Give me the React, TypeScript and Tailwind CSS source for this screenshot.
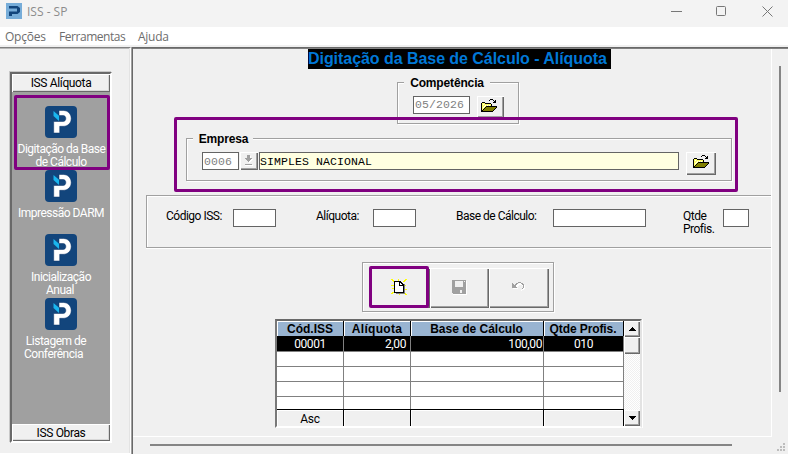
import type { ReactNode } from 'react';

const sans = "font-['Liberation_Sans',Arial,sans-serif]";
const small = "font-['Roboto',sans-serif] text-[12px] tracking-[-0.5px]";
const mono = "font-['Liberation_Mono',monospace] text-[11.5px] tracking-[0.1px]";
const etched = 'border border-[#a0a0a0] shadow-[1px_1px_0_#fff,inset_1px_1px_0_#fff]';
const raised =
  'bg-[#f0f0f0] shadow-[inset_1px_1px_0_#fff,inset_-1px_-1px_0_#696969,inset_-2px_-2px_0_#a0a0a0]';
const field = 'border border-[#646464] bg-white';

function Logo() {
  return (
    <svg width="32" height="32" viewBox="0 0 32 32" className="block shrink-0">
      <rect width="32" height="32" rx="4" fill="#12457c" />
      <path
        d="M14 4.500H18.300C22.800 4.500 26.200 7.900 26.200 12.500S22.800 20.300 18.300 20.300H14.700V27H8.700V15.500H18C19.800 15.500 20.800 14.200 20.800 12.500S19.800 9.500 18 9.500H14z"
        fill="#fff"
        stroke="#0a3266"
        strokeWidth="0.5"
      />
      <path d="M8.500 5l5.500 4.700v5.200L8.500 10z" fill="#19b5ee" />
    </svg>
  );
}

function FolderIcon() {
  return (
    <svg width="16" height="13" viewBox="0 0 16 13" shapeRendering="crispEdges" className="block">
      <path d="M1 4h3v1h6v4H5v1H4v1H3v1H1z" fill="#ffff66" />
      <path d="M2 5h1v1H2zM4 6h1v1H4zM6 6h1v1H6zM8 6h1v1H8zM2 8h1v1H2zM3 7h1v1H3zM5 7h1v1H5zM7 7h1v1H7z" fill="#fff" />
      <path d="M5 8h10v1h-1v1h-1v1h-1v1H2v-1h1v-1h1V9h1z" fill="#808000" />
      <path
        d="M1 3h3v1H1zM0 4h1v9H0zM4 4h6v1H4zM10 5h1v2h-1zM5 7h11v1H5zM4 8h1v1H4zM3 9h1v1H3zM2 10h1v1H2zM1 11h1v1H1zM15 8h1v1h-1zM14 9h1v1h-1zM13 10h1v1h-1zM12 11h1v1h-1zM1 12h11v1H1zM9 0h3v1H9zM8 1h1v1H8zM12 1h1v1h-1zM13 2h1v1h-1zM14 1h1v3h-1zM12 3h2v1h-2z"
        fill="#000"
      />
    </svg>
  );
}

function Group({ title, className, legend, children }: { title: string; className: string; legend: string; children: ReactNode }) {
  return (
    <div className={`relative ${etched} ${className}`}>
      <span
        className={`absolute -top-[7px] flex h-[14px] items-center justify-center whitespace-nowrap bg-[#f0f0f0] text-[12px] font-bold leading-[14px] text-black ${legend}`}
      >
        {title}
      </span>
      {children}
    </div>
  );
}

const items = [
  { lines: [['Digitação da Base', 'pl-px'], ['de Cálculo', '']] },
  { lines: [['Impressão DARM', '']] },
  { lines: [['Inicialização', ''], ['Anual', 'pr-[2px]']] },
  { lines: [['Listagem de', 'pr-[10px]'], ['Conferência', 'pr-[15px]']] },
];

function Sidebar() {
  const header = `flex shrink-0 items-center justify-center bg-[#f0f0f0] shadow-[inset_1px_1px_0_#fff,inset_-1px_-1px_0_#696969,inset_-2px_-2px_0_#d8d8d8] font-['Roboto',sans-serif] text-[12px] tracking-[-0.35px]`;
  return (
    <aside className="relative ml-[10px] mt-[24px] flex h-[371px] w-[102px] flex-col border-2 border-b-white border-l-[#696969] border-r-white border-t-[#696969] bg-[#a0a0a0] shadow-[-1px_-1px_0_#c8c8c8]">
      <div className={`h-[18px] ${header}`}>ISS Alíquota</div>
      <div className="flex grow flex-col pt-[14px]">
        {items.map((item) => (
          <div key={item.lines[0][0]} className="flex h-16 flex-col items-center">
            <Logo />
            <div className={`pt-[5px] text-center leading-[13px] text-white ${small}`}>
              {item.lines.map(([line, shift]) => (
                <div key={line} className={`whitespace-nowrap ${shift}`}>
                  {line}
                </div>
              ))}
            </div>
          </div>
        ))}
      </div>
      <div className={`h-[17px] ${header}`}>ISS Obras</div>
      <div className="absolute left-[2px] top-[21px] h-[75px] w-[96px] rounded-[2px] border-[3px] border-[#800080]" />
    </aside>
  );
}

function Toolbar() {
  const button = `flex h-[40px] items-center justify-center ${raised}`;
  return (
    <div className={`relative ml-[229px] mt-[14px] flex h-[50px] w-[192px] pl-[7px] pt-[5px] ${etched}`}>
      <div className={`w-[60px] ${button}`}>
        <svg width="16" height="16" viewBox="0 0 16 16" shapeRendering="crispEdges" className="mb-[2px] mr-[2px]">
          <path
            d="M0 0h2v1H0zM1 1h2v1H1zM2 2h1v1H2zM7 0h1v2H7zM14 0h2v1h-2zM13 1h2v1h-2zM12 2h2v1h-2zM0 6h3v1H0zM13 6h2v1h-2zM1 9h2v1H1zM14 10h2v1h-2zM1 13h2v1H1zM0 14h2v1H0zM13 14h2v1h-2zM14 15h2v1h-2zM8 14h1v2H8z"
            fill="#ff0"
          />
          <path d="M5 5h9v10H5z" fill="#808080" />
          <path d="M3 2h6l4 4v8H3z" fill="#000" />
          <path d="M4 3h4v4h4v6H4zM9 4h1v1H9zM9 5h2v1H9z" fill="#fff" />
        </svg>
      </div>
      <div className={`w-[59px] ${button}`}>
        <svg width="15" height="15" viewBox="0 0 15 15" shapeRendering="crispEdges" className="mb-[2px]">
          <path d="M1 1h14v14H1z" fill="#fff" />
          <path d="M0 0h14v14H1v-1H0z" fill="#a0a0a0" />
          <path d="M3 1h8v6H3zM8 10h2v3H8zM12 1h1v1h-1z" fill="#f0f0f0" />
        </svg>
      </div>
      <div className={`w-[60px] ${button}`}>
        <svg width="14" height="10" viewBox="0 0 14 10" shapeRendering="crispEdges" className="mb-[2px]">
          <path
            d="M1 2h1v1h1v1h1V3h1V2h2V1h3v1h2v1h1v4h-1v1h-2v1h-1V8h1V7h1V4h-1V3H7v1H6v1H5v1h1v1H1z"
            fill="#fff"
          />
          <path
            d="M0 1h1v1h1v1h1V2h1V1h2V0h3v1h2v1h1v4h-1v1h-1V6h1V3h-1V2H9V1H6v1H5v1H4v2h1v1H0z"
            fill="#a0a0a0"
          />
        </svg>
      </div>
      <div className="absolute left-[6px] top-[3px] h-[42px] w-[60px] rounded-[2px] border-[3px] border-[#800080]" />
    </div>
  );
}

function Grid() {
  const columns = 'grid grid-cols-[67px_67px_133px_80px]';
  const head =
    'flex items-center justify-center overflow-hidden whitespace-nowrap border-r border-black bg-[#99b4d1] pt-px text-[12px] font-bold leading-[14px] shadow-[inset_1px_1px_0_#fff]';
  const rows = ['h-[15px]', 'h-[15px]', 'h-[15px]', 'h-[13px]'];
  return (
    <div className="ml-[142px] mt-[7px] flex h-[109px] w-[367px] border-2 border-b-white border-l-[#787878] border-r-[#e3e3e3] border-t-[#696969] bg-white shadow-[1px_0_0_#fff]">
      <div className="flex w-[347px] flex-col">
        <div className={`${columns} h-[15px]`}>
          <div className={head}>Cód.ISS</div>
          <div className={`${head} tracking-[0.3px]`}>Alíquota</div>
          <div className={`${head} pr-px`}>Base de Cálculo</div>
          <div className={`${head} pr-px tracking-[-0.1px]`}>Qtde Profis.</div>
        </div>
        <div
          className={`${columns} h-[16px] border-b border-[#808080] bg-black font-['Roboto',sans-serif] text-[12px] leading-[16px] tracking-[-0.4px] text-white`}
        >
          <div className="border-r border-[#808080] text-center">00001</div>
          <div className="border-r border-[#808080] pr-[4px] text-right">2,00</div>
          <div className="border-r border-[#808080] pr-px text-right">100,00</div>
          <div className="border-r border-[#808080] text-center">010</div>
        </div>
        {rows.map((height, i) => (
          <div key={i} className={`${columns} ${height} border-b ${i === 3 ? 'border-black' : 'border-[#808080]'}`}>
            {[0, 1, 2, 3].map((c) => (
              <div key={c} className="border-r border-[#808080]" />
            ))}
          </div>
        ))}
        <div className={`${columns} h-[16px] font-['Roboto',sans-serif] text-[12px] leading-[18px]`}>
          {['Asc', '', '', ''].map((text, i) => (
            <div key={i} className="h-[16px] border-r border-black bg-[#f0f0f0] text-center shadow-[inset_1px_1px_0_#fff] tracking-[-0.3px]">
              {text}
            </div>
          ))}
        </div>
      </div>
      <div className="flex w-[17px] flex-col bg-[repeating-conic-gradient(#f0f0f0_0_25%,#fff_0_50%)] bg-[length:2px_2px]">
        <div className={`flex h-[16px] items-center justify-center ${raised}`}>
          <svg width="7" height="4" viewBox="0 0 7 4" shapeRendering="crispEdges">
            <path d="M3 0h1v1h1v1h1v1h1v1H0V3h1V2h1V1h1z" />
          </svg>
        </div>
        <div className={`h-[17px] ${raised}`} />
        <div className="grow" />
        <div className={`flex h-[16px] items-center justify-center ${raised}`}>
          <svg width="7" height="4" viewBox="0 0 7 4" shapeRendering="crispEdges">
            <path d="M0 0h7v1H6v1H5v1H4v1H3V3H2V2H1V1H0z" />
          </svg>
        </div>
      </div>
    </div>
  );
}

function Content() {
  return (
    <section className="relative flex h-[388px] w-[639px] flex-col border-b border-r border-white">
      <h1 className="ml-[175px] h-[20px] w-[303px] whitespace-nowrap bg-black text-[16px] font-bold leading-[19px] tracking-[-0.05px] text-[#0078d7]">
        Digitação da Base de Cálculo - Alíquota
      </h1>

      <Group title="Competência" className="ml-[264px] mt-[13px] h-[42px] w-[122px]" legend="left-[6px] w-[86px] tracking-[-0.15px]">
        <div className="flex pl-[15px] pt-[13px]">
          <div className={`h-[18px] w-[57px] pl-px leading-[16px] text-[#808080] ${field} ${mono}`}>05/2026</div>
          <button className={`ml-[7px] flex h-[22px] w-[27px] justify-center pr-[3px] pt-[3px] ${raised}`}>
            <FolderIcon />
          </button>
        </div>
      </Group>

      <Group title="Empresa" className="ml-[53px] mt-[14px] h-[43px] w-[546px]" legend="left-[6px] w-[60px] pl-px tracking-[-0.15px]">
        <div className="flex pl-[15px] pt-[13px]">
          <div className={`h-[18px] w-[37px] pl-px leading-[17px] text-[#808080] ${field} ${mono}`}>0006</div>
          <button className={`ml-px flex h-[18px] w-[18px] justify-center pr-px pt-[3px] ${raised}`}>
            <svg width="9" height="11" viewBox="0 0 9 11" shapeRendering="crispEdges">
              <path d="M4 1h3v3h2v1H8v1H7v1H6v1H5V7H4V6H3V5H2V4h2zM1 10h8v1H1z" fill="#fff" />
              <path d="M3 0h3v3h2v1H7v1H6v1H5v1H4V6H3V5H2V4H1V3h2zM1 9h7v1H1z" fill="#a0a0a0" />
            </svg>
          </button>
          <div className={`ml-px h-[18px] w-[420px] border border-[#646464] bg-[#ffffe1] leading-[17px] text-black ${mono}`}>
            SIMPLES NACIONAL
          </div>
          <button className={`ml-[7px] flex h-[23px] w-[30px] justify-center pt-[3px] ${raised}`}>
            <FolderIcon />
          </button>
        </div>
      </Group>

      <div
        className={`ml-[13px] mt-[14px] flex h-[53px] w-[625px] border-y border-l border-[#a0a0a0] pl-[19px] pt-[13px] leading-[13px] shadow-[0_1px_0_#fff,inset_1px_1px_0_#fff] ${small}`}
      >
        <label className="w-[67px] pt-px">Código ISS:</label>
        <div className={`h-[18px] w-[43px] ${field}`} />
        <label className="ml-[40px] w-[57px] pt-px">Alíquota:</label>
        <div className={`h-[18px] w-[43px] ${field}`} />
        <label className="ml-[40px] w-[97px] whitespace-nowrap pt-px">Base de Cálculo:</label>
        <div className={`h-[18px] w-[93px] ${field}`} />
        <label className="ml-[37px] w-[40px] pt-px">
          Qtde
          <br />
          Profis.
        </label>
        <div className={`h-[18px] w-[26px] ${field}`} />
      </div>

      <Toolbar />
      <Grid />
      <div className="absolute left-[41px] top-[68px] h-[75px] w-[564px] rounded-[2px] border-[3px] border-[#800080]" />
    </section>
  );
}

export default function App() {
  return (
    <div className={`flex h-[454px] w-[788px] flex-col overflow-hidden bg-[#f0f0f0] text-black ${sans}`}>
      <header className="flex h-[27px] shrink-0 bg-[#f3f3f3] pl-[6px] pt-[3px]">
        <svg width="16" height="16" viewBox="0 0 16 16">
          <path d="M0 0h16v16H0z" fill="#76acd8" />
          <path d="M3 3h8.500l2.500 2v4l-2.500 2H6v2H3V8.500h8v-3H3z" fill="#12457c" />
        </svg>
        <span className="ml-[5px] whitespace-nowrap font-['Open_Sans',sans-serif] text-[12px] leading-[17px] text-[#8c8c8c]">ISS - SP</span>
        <div className="grow" />
        <svg width="118" height="20" viewBox="0 0 118 20" fill="none" stroke="#777" strokeWidth="1">
          <path d="M1 8.500h11" />
          <rect x="46.500" y="3.500" width="9" height="9" rx="1" />
          <path d="M92.500 3.500l10 10M102.500 3.500l-10 10" />
        </svg>
      </header>
      <nav className="flex h-[18px] shrink-0 bg-white pl-[5px] font-['Open_Sans',sans-serif] text-[12px] leading-[20px] tracking-[-0.25px] text-[#6d6d6d]">
        <span className="w-[54px]">Opções</span>
        <span className="w-[79px] whitespace-nowrap tracking-[-0.45px]">Ferramentas</span>
        <span>Ajuda</span>
      </nav>
      <main className="flex grow pt-[2px]">
        <div className="h-[407px] w-[131px] shrink-0 border-b border-r border-t border-b-white border-r-white border-t-[#808080] shadow-[inset_-1px_0_0_#e3e3e3,inset_0_1px_0_#b8b8b8]">
          <Sidebar />
        </div>
        <div className="ml-px flex h-[407px] grow flex-col border-l border-t border-[#696969] shadow-[inset_0_1px_0_#808080,-1px_0_0_#a0a0a0]">
          <div className="flex pt-px">
            <Content />
            <div className="ml-[7px] mt-[17px] h-[326px] w-[2px] bg-[#858585]" />
          </div>
          <div className="flex">
            <div className="ml-[17px] mt-[7px] h-[2px] w-[582px] shrink-0 bg-[#858585]" />
            <svg width="8" height="8" viewBox="0 0 8 8" shapeRendering="crispEdges" className="ml-[45px] mt-[6px] shrink-0">
              <path d="M6 0h2v2H6zM3 3h2v2H3zM6 3h2v2H6zM0 6h2v2H0zM3 6h2v2H3zM6 6h2v2H6z" fill="#bdbdbd" />
            </svg>
          </div>
        </div>
      </main>
    </div>
  );
}
